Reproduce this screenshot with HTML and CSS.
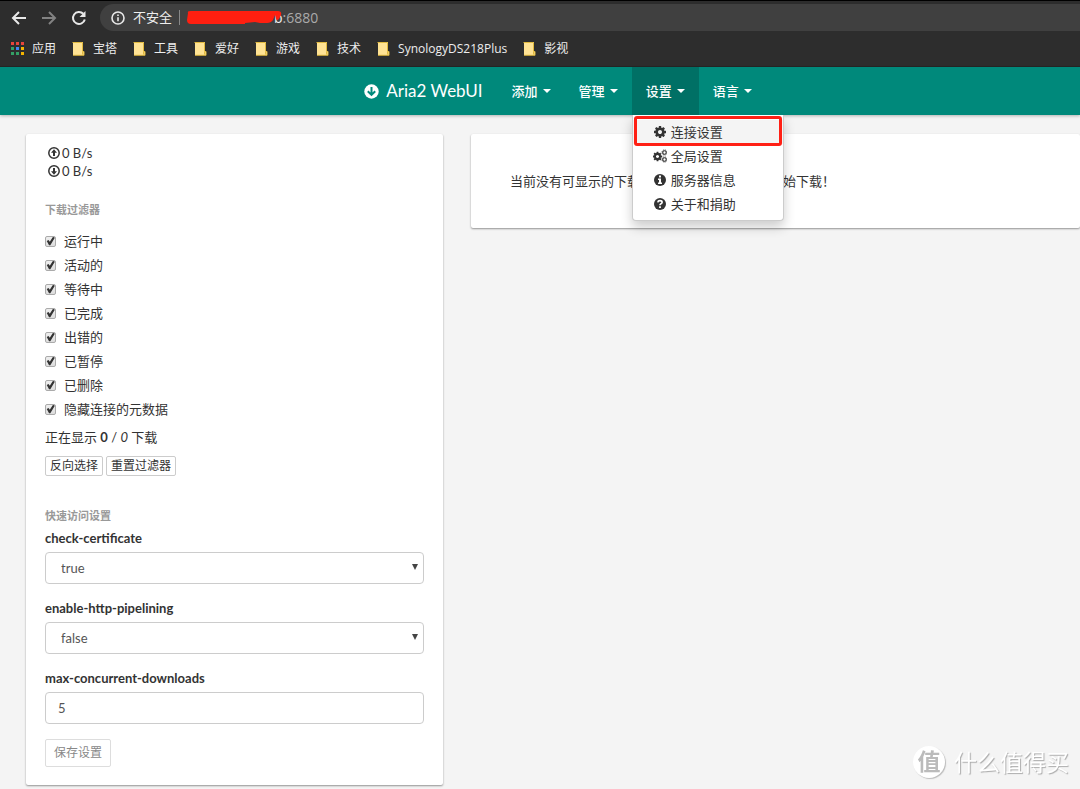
FILE: index.html
```html
<!DOCTYPE html>
<html lang="zh-CN">
<head>
<meta charset="utf-8">
<title>Aria2 WebUI</title>
<link rel="stylesheet" href="styles.css">
</head>
<body>
<svg class="defs" aria-hidden="true">
  <symbol id="cog" viewBox="0 0 1792 1792"><path d="M1152 896q0-106-75-181t-181-75-181 75-75 181 75 181 181 75 181-75 75-181zm512-109v222q0 12-8 23t-20 13l-185 28q-19 54-39 91 35 50 107 138 10 12 10 25t-9 23q-27 37-99 108t-94 71q-12 0-26-9l-138-108q-44 23-91 38-16 136-29 186-7 28-36 28h-222q-14 0-24.500-8.500t-11.500-21.500l-28-184q-49-16-90-37l-141 107q-10 9-25 9-14 0-25-11-126-114-165-168-7-10-7-23 0-12 8-23 15-21 51-66.500t54-70.500q-27-50-41-99l-183-27q-13-2-21-12.500t-8-23.500v-222q0-12 8-23t19-13l186-28q14-46 39-92-40-57-107-138-10-12-10-24 0-10 9-23 26-36 98.500-107.500t94.500-71.500q13 0 26 10l138 107q44-23 91-38 16-136 29-186 7-28 36-28h222q14 0 24.500 8.500t11.500 21.500l28 184q49 16 90 37l142-107q9-9 24-9 13 0 25 10 129 119 165 170 7 8 7 22 0 12-8 23-15 21-51 66.500t-54 70.500q26 50 41 98l183 28q13 2 21 12.500t8 23.500z"/></symbol>
  <symbol id="small-cog" viewBox="0 0 8 8"><circle cx="4" cy="4" r="2" fill="none" stroke="#333" stroke-width="1.300"/><circle cx="4" cy="4" r="3" fill="none" stroke="#333" stroke-width="1" stroke-dasharray="1.200 1.156"/></symbol>
  <symbol id="folder" viewBox="0 0 13 14"><path d="M1 0h10v9h1v4H1z" fill="#ffe394"/><path d="M.5.5h10v8.500M1 13.300h11V9.500h-1.500v3" fill="none" stroke="#e0b93f"/></symbol>
</svg>

<header class="browser">
  <div class="toolbar">
    <button class="tool" type="button" aria-label="后退"><svg width="16" height="16" viewBox="0 0 16 16" fill="none" stroke="#e8e8e8" stroke-width="2"><path d="M15 8H3M8 2L2 8l6 6"/></svg></button>
    <button class="tool" type="button" aria-label="前进"><svg width="16" height="16" viewBox="0 0 16 16" fill="none" stroke="#828282" stroke-width="2"><path d="M1 8h12M8 2l6 6-6 6"/></svg></button>
    <button class="tool" type="button" aria-label="刷新"><svg width="16" height="16" viewBox="0 0 16 16" fill="none" stroke="#e8e8e8" stroke-width="2"><path d="M13.800 9.500A6 6 0 1 1 12.300 3.800"/><path d="M14.500 1v6h-6z" fill="#e8e8e8" stroke="none"/></svg></button>
    <div class="address">
      <svg width="14" height="14" viewBox="0 0 14 14"><circle cx="7" cy="7" r="6" fill="none" stroke="#e8e8e8" stroke-width="1.600"/><path d="M6.200 6.200h1.600v4H6.200zM6.200 3.500h1.600v1.600H6.200z" fill="#e8e8e8"/></svg>
      <span class="insecure">不安全</span>
      <span class="url">
        <svg class="redaction" width="98" height="16" viewBox="0 0 98 16"><path d="M2 3Q1 1 5 1H92q4 0 3 4l-2 4q-2 2-3 0l-1-4-2 5q-2 3-6 3H74l-5-1-10 1v1H5q-4 0-4-4z" fill="#ff1f10"/></svg>
        <span>b<em>:6880</em></span>
      </span>
    </div>
  </div>
  <nav class="bookmarks" aria-label="书签">
    <a href="#"><svg width="13" height="14" viewBox="0 0 13 14"><path fill="#e8453c" d="M0 0h3v3H0zM5 0h3v3H5zM10 0h3v3h-3z"/><path fill="#34a065" d="M0 5h3v3H0zM0 10h3v3H0zM5 10h3v3H5z"/><path fill="#4285f4" d="M5 5h3v3H5z"/><path fill="#f4b400" d="M10 5h3v3h-3zM10 10h3v3h-3z"/></svg>应用</a>
    <a href="#"><svg width="13" height="14"><use href="#folder"/></svg>宝塔</a>
    <a href="#"><svg width="13" height="14"><use href="#folder"/></svg>工具</a>
    <a href="#"><svg width="13" height="14"><use href="#folder"/></svg>爱好</a>
    <a href="#"><svg width="13" height="14"><use href="#folder"/></svg>游戏</a>
    <a href="#"><svg width="13" height="14"><use href="#folder"/></svg>技术</a>
    <a href="#"><svg width="13" height="14"><use href="#folder"/></svg>SynologyDS218Plus</a>
    <a href="#"><svg width="13" height="14"><use href="#folder"/></svg>影视</a>
  </nav>
</header>

<nav class="navbar" aria-label="主导航">
  <a class="brand" href="#"><svg width="15" height="15" viewBox="0 0 15 15"><circle cx="7.500" cy="7.500" r="7.200" fill="#fff"/><path d="M7.500 3v7M3.800 7.200l3.700 3.700 3.700-3.700" fill="none" stroke="#00897b" stroke-width="2"/></svg>Aria2 WebUI</a>
  <ul class="menu">
    <li><button type="button">添加<i class="caret"></i></button></li>
    <li><button type="button">管理<i class="caret"></i></button></li>
    <li class="open"><button type="button" aria-expanded="true">设置<i class="caret"></i></button>
      <ul class="dropdown">
        <li class="active"><a href="#"><svg width="14" height="14"><use href="#cog"/></svg>连接设置</a><span class="marker"></span></li>
        <li><a href="#"><svg width="14" height="14" viewBox="0 0 14 14"><use href="#cog" x="-1" y="2" width="11" height="11"/><use href="#small-cog" x="8" y="0" width="7" height="7"/><use href="#small-cog" x="8" y="7" width="7" height="7"/></svg>全局设置</a></li>
        <li><a href="#"><svg width="14" height="14" viewBox="0 0 14 14"><circle cx="7" cy="7" r="6"/><path d="M6 2.500h2v2H6zM5 5.500h3v4h1V11H5V9.500h1V7H5z" fill="#fff"/></svg>服务器信息</a></li>
        <li><a href="#"><svg width="14" height="14" viewBox="0 0 14 14"><circle cx="7" cy="7" r="6"/><path d="M4.800 5.400Q5 3.700 7 3.700t2.100 1.600Q9.100 6.300 8 6.800 7 7.300 7 8.300" fill="none" stroke="#fff" stroke-width="1.700"/><path d="M6.100 9.300h1.800V11H6.100z" fill="#fff"/></svg>关于和捐助</a></li>
      </ul>
    </li>
    <li><button type="button">语言<i class="caret"></i></button></li>
  </ul>
</nav>

<div class="page">
  <aside class="card sidebar">
    <ul class="speeds">
      <li><svg width="12" height="12" viewBox="0 0 12 12"><circle cx="6" cy="6" r="5.200" fill="none" stroke="#333" stroke-width="1.500"/><path d="M6 2.300L9 5.800H7V9H5V5.800H3z"/></svg>0 B/s</li>
      <li><svg width="12" height="12" viewBox="0 0 12 12"><circle cx="6" cy="6" r="5.200" fill="none" stroke="#333" stroke-width="1.500"/><path d="M6 9.700L9 6.200H7V3H5v3.200H3z"/></svg>0 B/s</li>
    </ul>
    <h2>下载过滤器</h2>
    <div class="filters">
      <label><input type="checkbox" checked>运行中</label>
      <label><input type="checkbox" checked>活动的</label>
      <label><input type="checkbox" checked>等待中</label>
      <label><input type="checkbox" checked>已完成</label>
      <label><input type="checkbox" checked>出错的</label>
      <label><input type="checkbox" checked>已暂停</label>
      <label><input type="checkbox" checked>已删除</label>
      <label><input type="checkbox" checked>隐藏连接的元数据</label>
    </div>
    <p class="count">正在显示 <b>0</b> / <em>0</em> 下载</p>
    <div class="actions">
      <button type="button">反向选择</button>
      <button type="button">重置过滤器</button>
    </div>
    <form class="settings">
      <h2>快速访问设置</h2>
      <div class="field">
        <label for="cert">check-certificate</label>
        <div class="picker"><select id="cert"><option>true</option><option>false</option></select></div>
      </div>
      <div class="field">
        <label for="pipe">enable-http-pipelining</label>
        <div class="picker"><select id="pipe"><option>false</option><option>true</option></select></div>
      </div>
      <div class="field">
        <label for="max">max-concurrent-downloads</label>
        <input id="max" type="text" value="5">
      </div>
      <button class="save" type="button" disabled>保存设置</button>
    </form>
  </aside>
  <main class="card empty">当前没有可显示的下载，请使用上方的工具栏开始下载！</main>
</div>

<div class="watermark"><span class="seal">值</span>什么值得买</div>
</body>
</html>
```

FILE: styles.css
```css
* { box-sizing: border-box; }

body {
  margin: 0;
  min-height: 100vh;
  background: #f4f4f4;
  color: #333;
  font: 13px/18px Lato, "Noto Sans CJK SC", sans-serif;
}

ul, h2, p { margin: 0; padding: 0; list-style: none; }
a { color: inherit; text-decoration: none; }
button, input, select { font: inherit; color: inherit; }
svg { flex: none; }
.defs { position: absolute; width: 0; height: 0; }

/* Browser chrome */
.browser {
  background: #2d2d2d;
  border-top: 1px solid #000;
  border-bottom: 1px solid #262626;
  color: #eee;
  font-family: "Open Sans", "Noto Sans CJK SC", sans-serif;
}
.toolbar {
  display: flex;
  align-items: center;
  gap: 14px;
  padding: 3px 0 0 11px;
}
.tool {
  display: flex;
  padding: 0;
  border: 0;
  background: none;
}
.address {
  flex: 1;
  display: flex;
  align-items: center;
  height: 27px;
  padding-left: 11px;
  border-radius: 14px 0 0 14px;
  background: #404040;
}
.tool + .address { margin-left: -1px; }
.insecure {
  margin-left: 8px;
  padding-right: 7px;
  border-right: 1px solid #888;
  line-height: 15px;
}
.url {
  position: relative;
  padding-left: 94px;
  font-size: 14px;
}
.url em { color: #aaa; font-style: normal; }
.redaction { position: absolute; left: 6px; top: 1px; }
.bookmarks {
  display: flex;
  gap: 16px;
  padding: 10px 11px 9px;
  font-size: 12px;
  line-height: 16px;
}
.bookmarks a { display: flex; align-items: center; gap: 8px; white-space: nowrap; }

/* Application bar */
.navbar {
  display: flex;
  justify-content: center;
  height: 48px;
  padding-left: 38px;
  background: #00897b;
  box-shadow: 0 1px 3px #0004;
  color: #fff;
}
.brand {
  display: flex;
  align-items: center;
  gap: 7px;
  padding: 0 15px 0 12px;
  font-size: 17px;
}
.menu { display: flex; }
.menu > li { position: relative; }
.menu button {
  display: flex;
  align-items: center;
  gap: 5px;
  height: 100%;
  padding: 0 14px;
  border: 0;
  background: none;
  font-weight: 500;
}
.open > button { background: #007065; }
.caret {
  border: 4px solid transparent;
  border-top-color: #fff;
  border-bottom: 0;
}
.dropdown {
  position: absolute;
  top: 100%;
  left: 0;
  z-index: 2;
  width: 152px;
  padding: 5px 0 4px;
  border: 1px solid #ccc;
  border-top: 0;
  border-radius: 0 0 4px 4px;
  background: #fff;
  box-shadow: 0 6px 12px #0003;
  color: #333;
}
.dropdown li { position: relative; }
.dropdown a {
  display: flex;
  align-items: center;
  gap: 4px;
  padding-left: 20px;
  line-height: 24px;
}
.dropdown svg, .speeds svg { fill: #333; }
.dropdown .active { background: #f4f4f4; }
.marker {
  position: absolute;
  inset: -4px 1px -2px;
  border: 3px solid #ff2015;
  border-radius: 3px;
}

/* Content */
.page {
  display: flex;
  align-items: flex-start;
  gap: 28px;
  padding: 19px 0 4px 26px;
}
.card {
  border-radius: 2px;
  background: #fff;
  box-shadow: 0 1px 2px #0006;
}
.sidebar { flex: 0 0 417px; padding: 10px 19px 18px; }
.empty { flex: 1; padding: 38px 39px; }
.speeds { padding-left: 3px; }
.speeds li { display: flex; align-items: center; gap: 2px; }
h2 {
  color: #999;
  font-size: 11px;
  font-weight: 700;
  line-height: 18px;
}
.speeds + h2 { margin: 21px 0 10px; }
.filters label {
  display: flex;
  align-items: center;
  gap: 8px;
  line-height: 24px;
}
.filters input {
  appearance: none;
  width: 11px;
  height: 11px;
  margin: 0;
  border: 1px solid #aaa;
  border-radius: 2px;
  background: linear-gradient(#eee, #ddd);
}
.filters input:checked::before {
  content: "";
  display: block;
  height: 9px;
  background: #333;
  clip-path: polygon(8% 50%, 28% 40%, 42% 58%, 78% 4%, 98% 14%, 48% 96%, 34% 96%);
}
.count { margin-top: 7px; }
.actions { display: flex; gap: 3px; margin-top: 10px; }
.actions button, .save {
  border: 1px solid #ccc;
  border-radius: 2px;
  background: #fff;
  font-size: 12px;
  line-height: 18px;
}
.actions button { padding: 0 4px; }
.settings { margin-top: 31px; }
.field label {
  display: block;
  padding: 4px 0 5px;
  font-weight: 700;
}
.field + .field { margin-top: 11px; }
.field select, .field input {
  display: block;
  width: 100%;
  height: 32px;
  padding: 0 12px;
  border: 1px solid #ccc;
  border-radius: 4px;
  background: #fff;
  color: #555;
  appearance: none;
}
.field select { padding: 0 15px; }
.picker { position: relative; }
.picker::after {
  content: "";
  position: absolute;
  right: 6px;
  top: 12px;
  border: 3px solid transparent;
  border-top: 6px solid #444;
  border-bottom: 0;
}
.save {
  margin-top: 15px;
  padding: 4px 8px;
  border-color: #ddd;
  color: #888;
}

/* Site mark */
.watermark {
  position: fixed;
  right: 11px;
  bottom: 10px;
  display: flex;
  align-items: center;
  gap: 9px;
  color: #fff;
  font-size: 23px;
  line-height: 34px;
  text-shadow: 1px 1px 1px #aaa;
}
.seal {
  width: 32px;
  height: 32px;
  border-radius: 50%;
  background: #fff;
  box-shadow: 1px 1px 1px #bbb;
  color: #bbb;
  font-weight: 700;
  line-height: 30px;
  text-align: center;
  text-shadow: none;
}
```
